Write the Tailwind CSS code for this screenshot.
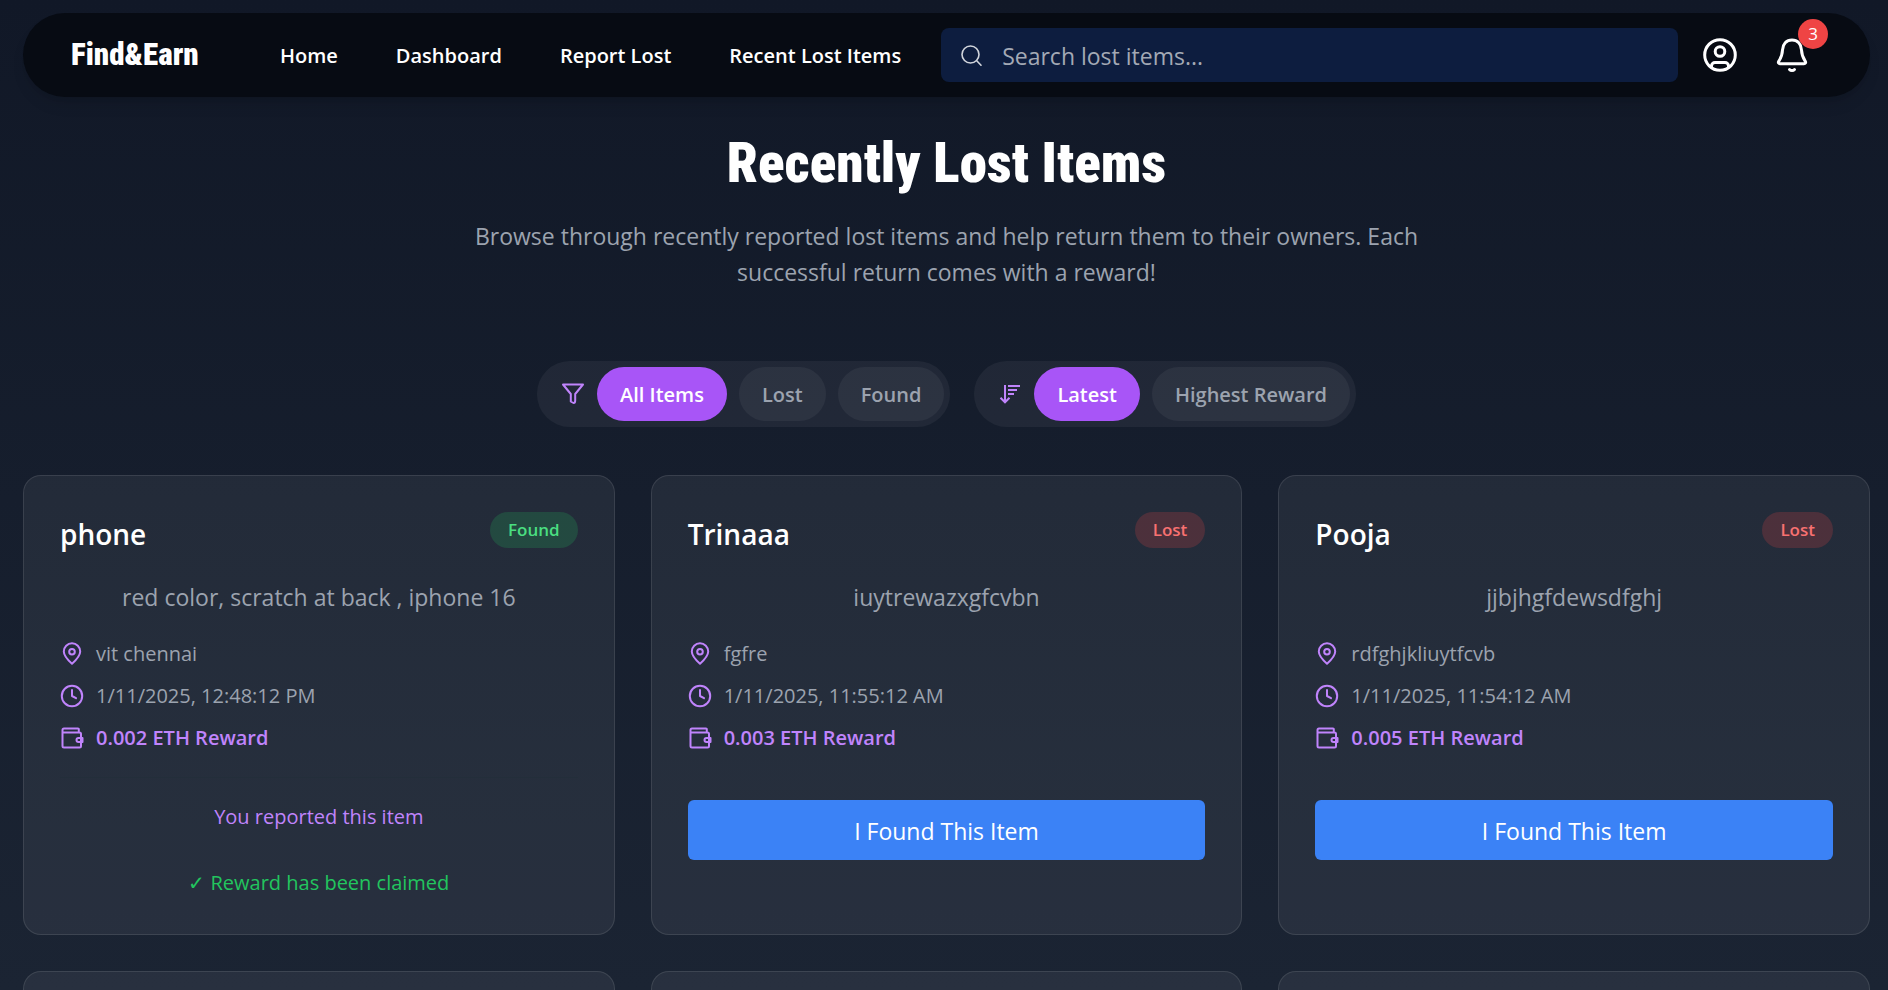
<!DOCTYPE html>
<html lang="en">
<head>
<meta charset="utf-8">
<title>Find&amp;Earn - Recently Lost Items</title>
<script src="https://cdn.jsdelivr.net/npm/@tailwindcss/browser@4"></script>
</head>
<body class="font-['Open_Sans','Noto_Sans',sans-serif] text-white">
<svg class="hidden" aria-hidden="true">
  <symbol id="pin" viewBox="0 0 24 24" fill="none" stroke="currentColor" stroke-width="2" stroke-linecap="round" stroke-linejoin="round"><path d="M20.200 9.500c0 4.600-5.500 9.800-8.200 12.200-2.700-2.400-8.200-7.600-8.200-12.200a8.200 8.200 0 0 1 16.400 0Z"/><circle cx="12" cy="9.800" r="2.800"/></symbol>
  <symbol id="clock" viewBox="0 0 24 24" fill="none" stroke="currentColor" stroke-width="2" stroke-linecap="round" stroke-linejoin="round"><circle cx="12" cy="12" r="10.200"/><path d="M12 6v6l4 2.200"/></symbol>
  <symbol id="wallet" viewBox="0 0 24 24" fill="none" stroke="currentColor" stroke-width="2" stroke-linecap="round" stroke-linejoin="round"><path d="M2.500 6.500h17a1.500 1.500 0 0 1 1.500 1.500v12a1.500 1.500 0 0 1-1.500 1.500H4a1.500 1.500 0 0 1-1.500-1.500V4a1.500 1.500 0 0 1 1.500-1.500h14a.8.8 0 0 1 .8.8v3.200"/><path d="M22.500 12v4h-4a2 2 0 0 1 0-4Z"/></symbol>
</svg>
<div class="h-screen overflow-hidden bg-linear-to-b from-[#111827] to-[#1b2433] pt-[13px] pr-[18px] pl-[23px]">
  <header class="flex h-[84px] items-center rounded-full bg-[#070b13] pr-[60px] pl-12 shadow-lg">
    <a href="#" class="w-[209px] shrink-0 font-['Roboto_Condensed','Roboto',sans-serif] text-[31px] font-black leading-9">Find&amp;Earn</a>
    <nav class="flex shrink-0 gap-[58px] pt-[2px] text-[20px] font-semibold whitespace-nowrap">
      <a href="#">Home</a><a href="#">Dashboard</a><a href="#">Report Lost</a><a href="#">Recent Lost Items</a>
    </nav>
    <label class="mr-6 ml-10 flex h-[54px] min-w-0 flex-1 items-center gap-5 rounded-lg bg-[#0d1d3f] px-5">
      <svg class="size-[21px] shrink-0 text-gray-300" viewBox="0 0 21 21" fill="none" stroke="currentColor" stroke-width="1.600" stroke-linecap="round" aria-hidden="true"><circle cx="9.500" cy="9.500" r="8.500"/><path d="M16 16l4 4.200"/></svg>
      <input type="text" aria-label="Search lost items" placeholder="Search lost items..." class="min-w-0 flex-1 bg-transparent pt-[2px] text-[23px] leading-9 outline-none placeholder:text-[#a3a9b5]">
    </label>
    <button type="button" aria-label="Account" class="mr-9 shrink-0">
      <svg class="size-9" viewBox="0 0 36 36" fill="none" stroke="currentColor" stroke-width="3"><circle cx="18" cy="18" r="15.300"/><circle cx="18" cy="14.500" r="4.800"/><path d="M9.500 30.500V29a3.500 3.500 0 0 1 3.500-3.500h10a3.500 3.500 0 0 1 3.500 3.500v1.500"/></svg>
    </button>
    <button type="button" aria-label="Notifications" class="relative shrink-0">
      <svg class="size-9" viewBox="0 0 36 36" fill="none" stroke="currentColor" stroke-width="3" stroke-linecap="round" stroke-linejoin="round"><path d="M18 3c-5.600 0-9.300 4.200-9.500 10-.2 6-1.500 8-3.800 11.300-.8 1.300 0 2.400 1.300 2.400h24c1.300 0 2.100-1.100 1.300-2.400C29 21 27.700 19 27.500 13 27.300 7.200 23.600 3 18 3Z"/><path d="M15.500 32.500c1.300 1.400 3.700 1.400 5 0"/></svg>
      <span class="absolute -top-[18px] -right-[18px] flex size-[30px] items-center justify-center rounded-full bg-[#ef4444] text-[17px]">3</span>
    </button>
  </header>

  <main>
    <h1 class="mt-9 text-center font-['Roboto_Condensed','Roboto',sans-serif] text-[55px] leading-[60px] font-black">Recently Lost Items</h1>
    <p class="mx-auto mt-[25px] max-w-[1008px] text-center text-[23px] leading-9 text-[#9ca3af]">Browse through recently reported lost items and help return them to their owners. Each successful return comes with a reward!</p>

    <div class="mt-[71px] flex justify-center gap-6 text-[20px] font-semibold">
      <div class="flex items-center gap-3 rounded-full bg-white/5 p-[6px] pl-6">
        <svg class="size-6 text-[#c084fc]" viewBox="0 0 24 24" fill="none" stroke="currentColor" stroke-width="2" stroke-linejoin="round" aria-hidden="true"><path d="M2 2.500h20l-7.800 9.500v6.500c0 1.500-.8 2.500-1.700 2.500l-2.700-1.500V12Z"/></svg>
        <button type="button" class="h-[54px] rounded-full bg-[#a855f7] px-[23px] pt-[2px]">All Items</button>
        <button type="button" class="h-[54px] rounded-full bg-white/5 px-[23px] pt-[2px] text-[#9ca3af]">Lost</button>
        <button type="button" class="h-[54px] rounded-full bg-white/5 px-[23px] pt-[2px] text-[#9ca3af]">Found</button>
      </div>
      <div class="flex items-center gap-3 rounded-full bg-white/5 p-[6px] pl-6">
        <svg class="size-6 text-[#c084fc]" viewBox="0 0 24 24" fill="none" stroke="currentColor" stroke-width="2" aria-hidden="true"><path d="M7 3v17M2.500 15.800 7 20.300l4.500-4.500M10 4h12M10 8h9M10 12h6"/></svg>
        <button type="button" class="h-[54px] rounded-full bg-[#a855f7] px-[23px] pt-[2px]">Latest</button>
        <button type="button" class="h-[54px] rounded-full bg-white/5 px-[23px] pt-[2px] text-[#9ca3af]">Highest Reward</button>
      </div>
    </div>

    <section class="mt-12 grid grid-cols-3 gap-9" aria-label="Items">
      <article class="rounded-[18px] border border-white/10 bg-white/6 p-9">
        <div class="flex items-start justify-between">
          <h2 class="pt-px text-[28px] leading-[42px] font-semibold">phone</h2>
          <span class="rounded-full bg-[#22c55e]/20 px-[18px] text-[17px] leading-9 font-semibold text-[#4ade80]">Found</span>
        </div>
        <p class="mt-6 text-center text-[23px] leading-9 text-[#9ca3af]">red color, scratch at back , iphone 16</p>
        <ul class="mt-6 flex flex-col gap-3 text-[20px] leading-[30px] text-[#9ca3af]">
          <li class="flex items-center gap-3"><svg class="size-6 text-[#c084fc]"><use href="#pin"/></svg>vit chennai</li>
          <li class="flex items-center gap-3"><svg class="size-6 text-[#c084fc]"><use href="#clock"/></svg>1/11/2025, 12:48:12 PM</li>
          <li class="flex items-center gap-3 font-semibold text-[#c084fc]"><svg class="size-6"><use href="#wallet"/></svg>0.002 ETH Reward</li>
        </ul>
        <div class="mt-6 flex flex-col gap-9 border-t border-[#232e3a] pt-6 text-center text-[20px] leading-[30px]">
          <p class="text-[#c084fc]">You reported this item</p>
          <p class="text-[#22c55e]">✓ Reward has been claimed</p>
        </div>
      </article>
      <article class="rounded-[18px] border border-white/10 bg-white/6 p-9">
        <div class="flex items-start justify-between">
          <h2 class="pt-px text-[28px] leading-[42px] font-semibold">Trinaaa</h2>
          <span class="rounded-full bg-[#ef4444]/20 px-[18px] text-[17px] leading-9 font-semibold text-[#f87171]">Lost</span>
        </div>
        <p class="mt-6 text-center text-[23px] leading-9 text-[#9ca3af]">iuytrewazxgfcvbn</p>
        <ul class="mt-6 flex flex-col gap-3 text-[20px] leading-[30px] text-[#9ca3af]">
          <li class="flex items-center gap-3"><svg class="size-6 text-[#c084fc]"><use href="#pin"/></svg>fgfre</li>
          <li class="flex items-center gap-3"><svg class="size-6 text-[#c084fc]"><use href="#clock"/></svg>1/11/2025, 11:55:12 AM</li>
          <li class="flex items-center gap-3 font-semibold text-[#c084fc]"><svg class="size-6"><use href="#wallet"/></svg>0.003 ETH Reward</li>
        </ul>
        <button type="button" class="mt-[47px] h-[60px] w-full rounded-md bg-[#3b82f6] pt-[2px] text-[23px]">I Found This Item</button>
      </article>
      <article class="rounded-[18px] border border-white/10 bg-white/6 p-9">
        <div class="flex items-start justify-between">
          <h2 class="pt-px text-[28px] leading-[42px] font-semibold">Pooja</h2>
          <span class="rounded-full bg-[#ef4444]/20 px-[18px] text-[17px] leading-9 font-semibold text-[#f87171]">Lost</span>
        </div>
        <p class="mt-6 text-center text-[23px] leading-9 text-[#9ca3af]">jjbjhgfdewsdfghj</p>
        <ul class="mt-6 flex flex-col gap-3 text-[20px] leading-[30px] text-[#9ca3af]">
          <li class="flex items-center gap-3"><svg class="size-6 text-[#c084fc]"><use href="#pin"/></svg>rdfghjkliuytfcvb</li>
          <li class="flex items-center gap-3"><svg class="size-6 text-[#c084fc]"><use href="#clock"/></svg>1/11/2025, 11:54:12 AM</li>
          <li class="flex items-center gap-3 font-semibold text-[#c084fc]"><svg class="size-6"><use href="#wallet"/></svg>0.005 ETH Reward</li>
        </ul>
        <button type="button" class="mt-[47px] h-[60px] w-full rounded-md bg-[#3b82f6] pt-[2px] text-[23px]">I Found This Item</button>
      </article>
      <article class="min-h-96 rounded-[18px] border border-white/10 bg-white/6 p-9"></article>
      <article class="min-h-96 rounded-[18px] border border-white/10 bg-white/6 p-9"></article>
      <article class="min-h-96 rounded-[18px] border border-white/10 bg-white/6 p-9"></article>
    </section>
  </main>
</div>
</body>
</html>
